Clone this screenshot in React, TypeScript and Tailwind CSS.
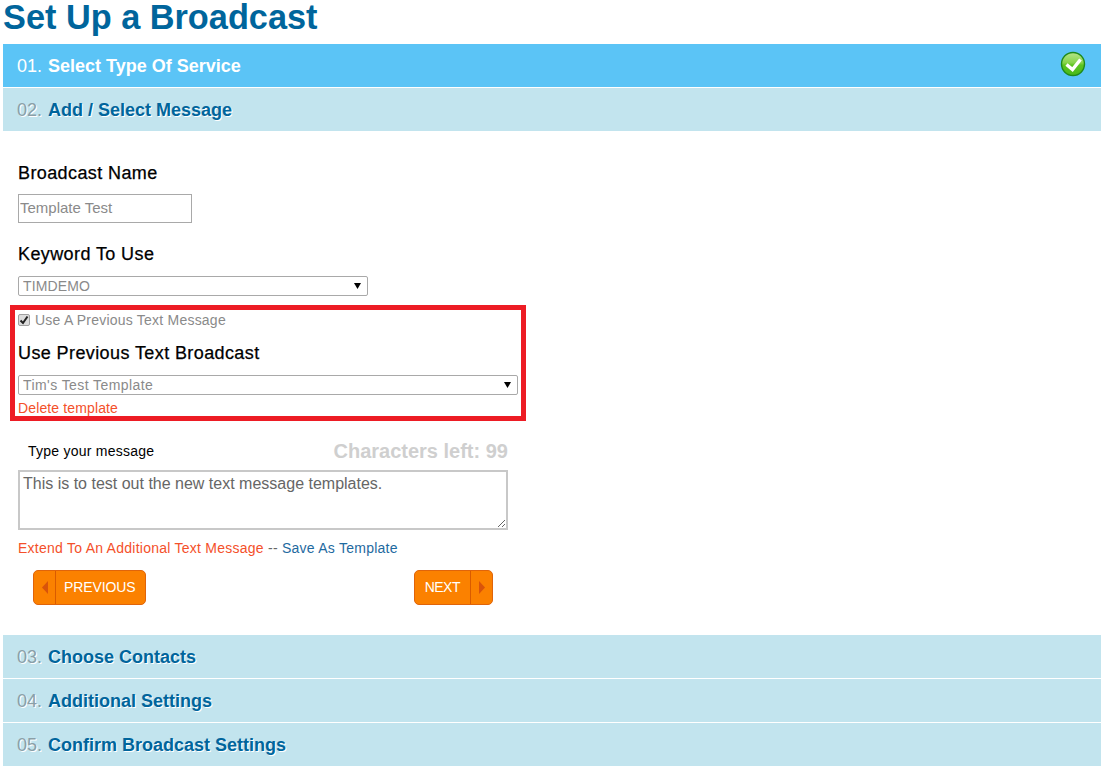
import React from 'react';

const font = "font-['Liberation_Sans',Arial,sans-serif]";
const label = 'text-[18px] leading-[21px] text-black tracking-[0.4px] [-webkit-text-stroke:0.25px_#000]';

// accordion header bar, the first one is the "done" state
const StepBar = ({ num, title, done }: { num: string; title: string; done?: boolean }) => (
  <div className={`h-[43px] mb-px flex items-center justify-between pl-[14px] pr-[15px] text-[18px] ${done ? 'bg-[#5bc4f6]' : 'bg-[#c2e4ee]'}`}>
    <div className="pt-[2px]">
      <span className={done ? 'text-white' : 'text-[#8a9fa8] [text-shadow:1px_1px_0_#fff]'}>{num}. </span>
      <span className={`font-bold ml-px ${done ? 'text-white' : 'text-[#00659c] [text-shadow:1px_1px_0_#fff]'}`}>{title}</span>
    </div>
    {done && (
      <svg width="26" height="26" viewBox="0 0 26 26" className="mb-[4px]">
        <defs>
          <linearGradient id="okGreen" x1="0" y1="0" x2="0" y2="1">
            <stop offset="0" stopColor="#b5e58a" />
            <stop offset="0.45" stopColor="#86d44a" />
            <stop offset="0.55" stopColor="#5cc420" />
            <stop offset="1" stopColor="#47b81a" />
          </linearGradient>
        </defs>
        <circle cx="13" cy="13" r="11.5" fill="url(#okGreen)" stroke="#1f8a1a" strokeWidth="1.4" />
        <path d="M6.5 13.5l6 5 8-10" fill="none" stroke="#fff" strokeWidth="3.4" />
      </svg>
    )}
  </div>
);

const Select = ({ value, width, text }: { value: string; width: string; text: string }) => (
  <div className={`relative h-5 ${width}`}>
    <select
      defaultValue={value}
      className={`block appearance-none w-full h-full border border-[#a9a9a9] rounded-[2px] bg-white pl-[4px] pb-[1px] text-[14px] leading-[16px] text-[#8a8a8a] outline-none ${text}`}
    >
      <option>{value}</option>
    </select>
    <svg width="7" height="6" viewBox="0 0 7 6" className="absolute right-[7px] top-[7px]">
      <path d="M0 0h7L3.5 6z" fill="#000" />
    </svg>
  </div>
);

const NavButton = ({ label, dir }: { label: string; dir: 'prev' | 'next' }) => {
  const arrow = (
    <div className={`h-full flex items-center justify-center border-[#d95b00] ${dir === 'prev' ? 'w-[22px] border-r' : 'w-[22px] border-l'}`}>
      <svg width="6" height="13" viewBox="0 0 6 13">
        <path d={dir === 'prev' ? 'M6 0v13L0 6.5z' : 'M0 0v13L6 6.5z'} fill="#d9540a" />
      </svg>
    </div>
  );
  return (
    <button className="h-[35px] flex items-center bg-[#fb8100] border border-[#e0640a] rounded-[5px] text-white text-[14px]">
      {dir === 'prev' && arrow}
      <span className={dir === 'prev' ? 'pl-[8px] pr-[9px] tracking-[-0.1px]' : 'pl-[10px] pr-[10px] tracking-[-0.5px]'}>{label}</span>
      {dir === 'next' && arrow}
    </button>
  );
};

export default function App() {
  return (
    <div className={`${font} bg-white h-[770px] overflow-hidden pl-[3px] pr-[5px]`}>
      <h1 className="text-[34.3px] leading-[34px] h-[44px] font-bold text-[#00659c]">Set Up a Broadcast</h1>

      <StepBar num="01" title="Select Type Of Service" done />
      <StepBar num="02" title="Add / Select Message" />

      {/* step 2 form */}
      <div className="h-[503px] pl-[15px] pt-[31px]">
        <div className={label}>Broadcast Name</div>
        <input
          defaultValue="Template Test"
          className="block mt-[10px] w-[174px] h-[29px] border border-[#a9a9a9] px-[1px] pb-[2px] text-[15px] text-[#8a8a8a] outline-none"
        />
        <div className={`mt-[21px] ${label}`}>Keyword To Use</div>
        <div className="mt-[11px]">
          <Select value="TIMDEMO" width="w-[350px]" text="tracking-[0.15px]" />
        </div>

        {/* red highlight box */}
        <div className="-ml-[8px] mt-[9px] w-[516px] h-[116px] border-[5px] border-[#ed1c24] pl-[3px] pt-[3px]">
          <div className="flex items-center h-[14px] text-[14px] tracking-[0.22px] text-[#8a8a8a]">
            <span className="w-[12px] h-[12px] mr-[5px] border border-[#a0a0a0] rounded-[2px] bg-[#dcdcdc] flex items-center justify-center">
              <svg width="10" height="10" viewBox="0 0 10 10">
                <path d="M1.5 5.5l2.5 2.5 4.5-6.5" fill="none" stroke="#222" strokeWidth="2" />
              </svg>
            </span>
            Use A Previous Text Message
          </div>
          <div className={`mt-[16px] ${label}`}>Use Previous Text Broadcast</div>
          <div className="mt-[11px]">
            <Select value="Tim's Test Template" width="w-[500px]" text="tracking-[0.42px]" />
          </div>
          <div className="mt-[5px] text-[14px] leading-[16px] tracking-[0.13px] text-[#f4502a]">Delete template</div>
        </div>

        <div className="mt-[16px] w-[490px] h-[28px] flex items-center justify-between pl-[10px]">
          <span className="text-[14px] tracking-[0.24px] text-black">Type your message</span>
          <span className="text-[20px] font-bold text-[#cfcfcf]">Characters left: 99</span>
        </div>
        <textarea
          defaultValue="This is to test out the new text message templates."
          className="block mt-[5px] w-[490px] h-[60px] border-2 border-[#c8c8c8] px-[3px] py-[2px] text-[16px] leading-[19px] text-[#666666] outline-none"
        />
        <div className="mt-[10px] text-[14px] leading-[16px] tracking-[0.25px]">
          <span className="text-[#f4502a]">Extend To An Additional Text Message</span>
          <span className="text-[#666666]"> -- </span>
          <span className="text-[#1f6aa0]">Save As Template</span>
        </div>
        <div className="mt-[14px] w-[460px] ml-[15px] flex justify-between">
          <NavButton label="PREVIOUS" dir="prev" />
          <NavButton label="NEXT" dir="next" />
        </div>
      </div>

      <StepBar num="03" title="Choose Contacts" />
      <StepBar num="04" title="Additional Settings" />
      <StepBar num="05" title="Confirm Broadcast Settings" />
    </div>
  );
}
